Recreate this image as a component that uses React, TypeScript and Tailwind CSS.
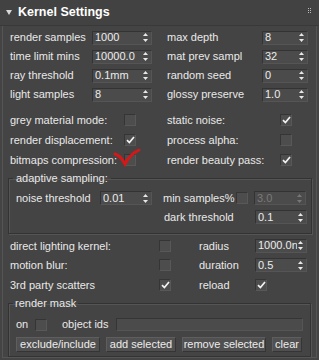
import React from 'react';

// small up/down spinner arrows
const Arrows = ({ dim = false }: { dim?: boolean }) => (
  <svg width="5" height="9" viewBox="0 0 5 9" className="shrink-0">
    <path d="M2.5 0 L5 3 L0 3 Z" fill={dim ? '#777' : '#e8e8e8'} />
    <path d="M0 6 L5 6 L2.5 9 Z" fill={dim ? '#777' : '#e8e8e8'} />
  </svg>
);

const Spinner = ({ value, w, dim = false }: { value: string; w: string; dim?: boolean }) => (
  <div
    className={`${w} h-[14px] flex items-center gap-[1px] pl-[2px] pr-[3px] bg-[#4b4b4b] border-t border-l border-[#333] border-b border-r border-b-[#555] border-r-[#555] ${dim ? 'text-[#7a7a7a]' : 'text-[#ececec]'}`}
  >
    <span className="flex-1 min-w-0 leading-none whitespace-nowrap overflow-hidden">{value}</span>
    <Arrows dim={dim} />
  </div>
);

const Check = ({ on = false }: { on?: boolean }) => (
  <div className="w-[12px] h-[12px] shrink-0 bg-[#4d4d4d] border-t border-l border-[#353535] border-b border-r border-b-[#585858] border-r-[#585858] flex items-center justify-center">
    {on && (
      <svg width="9" height="8" viewBox="0 0 9 8">
        <path d="M1 4.2 L3.4 6.6 L8 1" stroke="#f2f2f2" strokeWidth="1.7" fill="none" />
      </svg>
    )}
  </div>
);

const Btn = ({ label, w }: { label: string; w: string }) => (
  <div className={`${w} h-[15px] flex items-center justify-center bg-[#505050] border-t border-l border-[#5e5e5e] border-b border-r border-b-[#353535] border-r-[#353535] text-[#ececec] leading-none whitespace-nowrap`}>
    {label}
  </div>
);

export default function App() {
  return (
    <div
      className="w-[319px] h-[360px] bg-[#444444] text-[#e9e9e9] text-[11px] overflow-hidden"
      style={{ fontFamily: '"Liberation Sans", Arial, sans-serif' }}
    >
      {/* rollout title */}
      <div className="h-[26px] flex items-center pl-[6px] pr-[8px] bg-[#424242] border-b border-[#393939]">
        <svg width="6" height="5" viewBox="0 0 6 5" className="mr-[6px]">
          <path d="M0 0 L6 0 L3 5 Z" fill="#d8d8d8" />
        </svg>
        <span className="font-bold text-[12.5px] text-white">Kernel Settings</span>
        <div className="ml-auto grid grid-cols-2 gap-[1px] mt-[-4px]">
          {Array.from({ length: 6 }).map((_, i) => (
            <div key={i} className="w-[1px] h-[1px] bg-[#bbb]" />
          ))}
        </div>
      </div>

      {/* rollout body */}
      <div className="mx-[2px] h-[332px] border-l border-r border-b border-[#555] pt-[2px]">
        {/* spinner rows */}
        {[
          ['render samples', '1000', 'max depth', '8'],
          ['time limit mins', '10000.0', 'mat prev sampl', '32'],
          ['ray threshold', '0.1mm', 'random seed', '0'],
          ['light samples', '8', 'glossy preserve', '1.0'],
        ].map(([l1, v1, l2, v2]) => (
          <div key={l1} className="h-[19px] flex items-center">
            <span className="pl-[7px] w-[89px] whitespace-nowrap">{l1}</span>
            <Spinner value={v1} w="w-[60px]" />
            <span className="pl-[15px] w-[110px] whitespace-nowrap">{l2}</span>
            <Spinner value={v2} w="w-[46px]" />
          </div>
        ))}

        {/* checkbox rows */}
        <div className="mt-[6px]">
          {[
            ['grey material mode:', false, 'static noise:', true],
            ['render displacement:', true, 'process alpha:', false],
            ['bitmaps compression:', false, 'render beauty pass:', true],
          ].map(([l1, c1, l2, c2], i) => (
            <div key={l1 as string} className="h-[20px] flex items-center">
              <span className="pl-[7px] w-[121px] whitespace-nowrap">{l1}</span>
              <div className="relative">
                <Check on={c1 as boolean} />
                {i === 2 && (
                  <svg
                    width="28"
                    height="18"
                    viewBox="0 0 28 18"
                    className="absolute left-[-11px] top-[-5px]"
                  >
                    <path
                      d="M2 5 C5 6 9 9 12 15 C15 9 20 4 26 1"
                      stroke="#d41818"
                      strokeWidth="3"
                      fill="none"
                      strokeLinecap="round"
                    />
                  </svg>
                )}
              </div>
              <span className="pl-[31px] w-[144px] whitespace-nowrap">{l2}</span>
              <Check on={c2 as boolean} />
            </div>
          ))}
        </div>

        {/* adaptive sampling group */}
        <fieldset className="mx-[5px] mt-[2px] h-[62px] border border-[#333] shadow-[inset_1px_1px_0_#555,1px_1px_0_#555] pl-[6px] pr-[4px]">
          <legend className="px-[3px] ml-[-2px] leading-[13px]">adaptive sampling:</legend>
          <div className="h-[18px] flex items-center mt-[4px]">
            <span className="w-[85px] pl-[1px] whitespace-nowrap">noise threshold</span>
            <Spinner value="0.01" w="w-[52px]" />
            <span className="pl-[11px] w-[84px] whitespace-nowrap">min samples%</span>
            <Check />
            <div className="w-[6px]" />
            <Spinner value="3.0" w="w-[52px]" dim />
          </div>
          <div className="h-[20px] flex items-center">
            <span className="ml-[149px] w-[91px] whitespace-nowrap">dark threshold</span>
            <Spinner value="0.1" w="w-[52px]" />
          </div>
        </fieldset>

        {/* misc rows */}
        <div className="mt-[2px]">
          {[
            ['direct lighting kernel:', false, 'radius', 'spin', '1000.0n'],
            ['motion blur:', false, 'duration', 'spin', '0.5'],
            ['3rd party scatters', true, 'reload', 'check', ''],
          ].map(([l1, c1, l2, kind, v]) => (
            <div key={l1 as string} className="h-[19.5px] flex items-center">
              <span className="pl-[7px] w-[156px] whitespace-nowrap">{l1}</span>
              <Check on={c1 as boolean} />
              <span className="pl-[28px] w-[84px] whitespace-nowrap">{l2}</span>
              {kind === 'spin' ? <Spinner value={v as string} w="w-[52px]" /> : <Check on />}
            </div>
          ))}
        </div>

        {/* render mask group */}
        <fieldset className="mx-[5px] mt-[2px] h-[60px] border border-[#333] shadow-[inset_1px_1px_0_#555,1px_1px_0_#555] pl-[7px] pr-[7px]">
          <legend className="px-[2px] ml-[-3px] leading-[13px]">render mask</legend>
          <div className="h-[16px] flex items-center mt-[7px]">
            <span className="w-[19px]">on</span>
            <Check />
            <span className="pl-[15px] w-[69px] whitespace-nowrap">object ids</span>
            <div className="flex-1 h-[13px] bg-[#4b4b4b] border-t border-l border-[#353535] border-b border-r border-b-[#555] border-r-[#555]" />
          </div>
          <div className="flex items-center gap-[6px] mt-[4px]">
            <Btn label="exclude/include" w="w-[84px]" />
            <Btn label="add selected" w="w-[70px]" />
            <Btn label="remove selected" w="w-[84px]" />
            <Btn label="clear" w="w-[30px]" />
          </div>
        </fieldset>
      </div>
    </div>
  );
}
